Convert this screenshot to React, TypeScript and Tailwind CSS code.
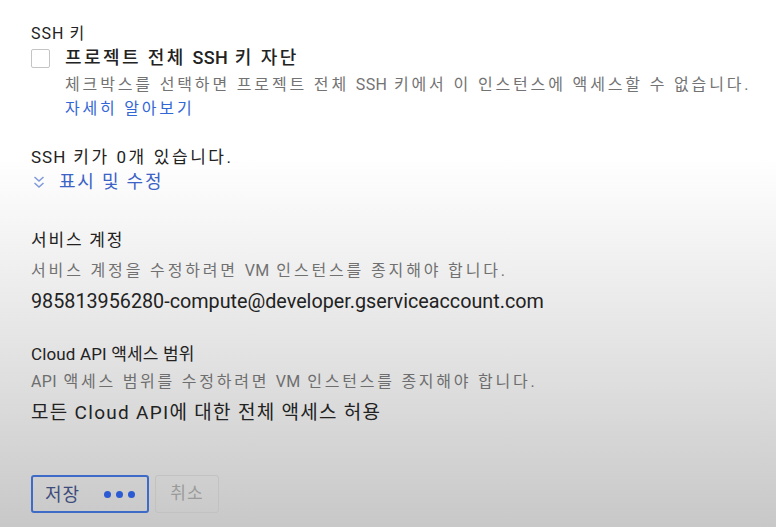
import React from 'react'

const font = { fontFamily: 'Roboto, "Noto Sans CJK KR", sans-serif' }

function ChevronsDown() {
    return (
        <svg width="12" height="16" viewBox="0 0 12 16" fill="none" stroke="#7f98d9" strokeWidth="1.5">
            <path d="M1.5 3 L6 7 L10.5 3" />
            <path d="M1.5 9 L6 13 L10.5 9" />
        </svg>
    )
}

export default function App() {
    return (
        <div
            className="w-[776px] h-[527px] overflow-hidden bg-[linear-gradient(to_bottom,#ffffff_0%,#ffffff_30%,#f0f0f0_50%,#e2e2e2_68%,#d4d4d4_85%,#c8c8c8_100%)] text-[#222222]"
            style={font}
        >
            <div className="pl-[31px] pt-[24px] flex flex-col">
                <div className="text-[16px] leading-[20px] tracking-[1px]">SSH 키</div>
                <div className="flex items-start mt-[2px]">
                    <div className="w-[19px] h-[19px] mt-[3px] border border-[#c4c4c4] rounded-[2px] bg-white shrink-0" />
                    <div className="ml-[15px] flex flex-col">
                        <div className="text-[18px] leading-[24px] font-medium tracking-[2.4px]">
                            프로젝트 전체 <span className="tracking-[0.3px]">SSH</span> 키 자단
                        </div>
                        <div className="text-[16px] leading-[26px] text-[#737373] tracking-[2.85px] mt-[2px] whitespace-nowrap">
                            체크박스를 선택하면 프로젝트 전체 <span className="tracking-[0.3px]">SSH</span> 키에서 이 인스턴스에 액세스할 수 없습니다.
                        </div>
                        <div className="text-[16px] leading-[22px] text-[#3367d6] tracking-[2.8px]">자세히 알아보기</div>
                    </div>
                </div>

                <div className="text-[17px] leading-[22px] tracking-[2.6px] mt-[26px]">
                    <span className="tracking-[1px]">SSH</span> 키가 0개 있습니다.
                </div>
                <div className="flex items-center gap-[14px] text-[18px] leading-[24px] text-[#3d63c6] tracking-[1.8px] mt-[2px] pl-[2px]">
                    <ChevronsDown />
                    <span>표시 및 수정</span>
                </div>

                <div className="text-[17px] leading-[22px] tracking-[1.8px] mt-[35px]">서비스 계정</div>
                <div className="text-[16px] leading-[22px] text-[#717171] tracking-[2.85px] mt-[9px]">
                    서비스 계정을 수정하려면 <span className="tracking-[0.3px]">VM</span> 인스턴스를 종지해야 합니다.
                </div>
                <div className="text-[19.75px] leading-[24px] mt-[8px]">
                    985813956280-compute@developer.gserviceaccount.com
                </div>

                <div className="text-[17px] leading-[22px] tracking-[0.15px] mt-[29px]">Cloud API 액세스 범위</div>
                <div className="text-[16px] leading-[22px] text-[#6e6e6e] tracking-[2.75px] mt-[6px]">
                    <span className="tracking-[0.3px]">API</span> 액세스 범위를 수정하려면 <span className="tracking-[0.3px]">VM</span> 인스턴스를 종지해야 합니다.
                </div>
                <div className="text-[19px] leading-[24px] tracking-[1.3px] mt-[8px]">모든 Cloud API에 대한 전체 액세스 허용</div>

                <div className="flex gap-[6px] mt-[50px]">
                    <button className="w-[118px] h-[38px] border-2 border-[#3f6bc8] rounded-[3px] flex items-center pl-[12px] gap-[24px] text-[18px] text-[#3e4c7c]">
                        <span className="tracking-[1px]">저장</span>
                        <span className="flex gap-[5px]">
                            <span className="w-[7px] h-[7px] rounded-full bg-[#2b5ad2]" />
                            <span className="w-[7px] h-[7px] rounded-full bg-[#2b5ad2]" />
                            <span className="w-[7px] h-[7px] rounded-full bg-[#2b5ad2]" />
                        </span>
                    </button>
                    <button className="w-[64px] h-[38px] border border-[#c2c2c2] rounded-[3px] text-[17px] text-[#9a9a9a] tracking-[1px]">
                        취소
                    </button>
                </div>
            </div>
        </div>
    )
}
